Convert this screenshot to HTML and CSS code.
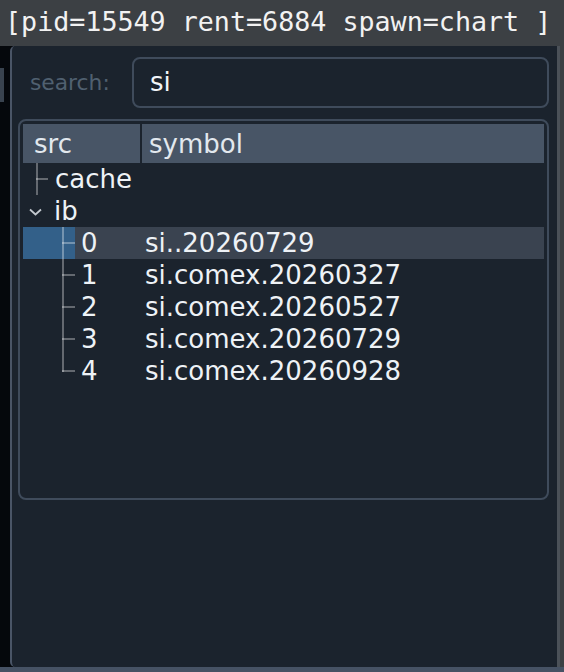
FILE: index.html
```html
<!DOCTYPE html>
<html>
<head>
<meta charset="utf-8">
<link rel="stylesheet" href="styles.css">
</head>
<body>
<div class="app">
  <div class="titlebar">[pid=15549 rent=6884 spawn=chart ]</div>
  <div class="main">
    <div class="side"><div class="side-tab"></div></div>
    <div class="panel">
      <div class="search">
        <span class="label">search:</span>
        <div class="input">si</div>
      </div>
      <div class="tree">
        <div class="thead">
          <div class="th src">src</div>
          <div class="th sym">symbol</div>
        </div>
        <div class="row">
          <div class="cell src"><span class="top-indent"></span><span class="guide"></span><span class="name top">cache</span></div>
          <div class="cell sym"></div>
        </div>
        <div class="row">
          <div class="cell src"><svg class="chev" width="13" height="8" viewBox="0 0 13 8"><path d="M1 1.5 L6.5 6.5 L12 1.5" fill="none" stroke="#c3c9cf" stroke-width="1.8"/></svg><span class="name ib">ib</span></div>
          <div class="cell sym"></div>
        </div>
        <div class="row selected">
          <div class="cell src"><span class="indent"><span class="guide"></span></span><span class="name leaf">0</span></div>
          <div class="cell sym">si..20260729</div>
        </div>
        <div class="row">
          <div class="cell src"><span class="indent"><span class="guide"></span></span><span class="name leaf">1</span></div>
          <div class="cell sym">si.comex.20260327</div>
        </div>
        <div class="row">
          <div class="cell src"><span class="indent"><span class="guide"></span></span><span class="name leaf">2</span></div>
          <div class="cell sym">si.comex.20260527</div>
        </div>
        <div class="row">
          <div class="cell src"><span class="indent"><span class="guide"></span></span><span class="name leaf">3</span></div>
          <div class="cell sym">si.comex.20260729</div>
        </div>
        <div class="row">
          <div class="cell src"><span class="indent"><span class="guide last"></span></span><span class="name leaf">4</span></div>
          <div class="cell sym">si.comex.20260928</div>
        </div>
      </div>
    </div>
    <div class="scroll"><div class="scroll-a"></div><div class="scroll-b"></div></div>
  </div>
  <div class="bottom"></div>
</div>
</body>
</html>
```

FILE: styles.css
```css
html, body {
  margin: 0;
  padding: 0;
  background: #05080c;
}
.app {
  width: 564px;
  height: 672px;
  display: flex;
  flex-direction: column;
  overflow: hidden;
}
.titlebar {
  height: 46px;
  flex: 0 0 46px;
  background: #3c4044;
  color: #f2f2f2;
  font-family: "DejaVu Sans Mono", monospace;
  font-size: 26.7px;
  line-height: 44px;
  padding-left: 5px;
  white-space: pre;
  box-sizing: border-box;
}
.main {
  flex: 1;
  display: flex;
  min-height: 0;
}
.side {
  width: 10px;
  flex: 0 0 10px;
  background: #05080c;
}
.side-tab {
  margin-top: 22px;
  width: 4px;
  height: 34px;
  background: #39434f;
}
.panel {
  flex: 1;
  background: #1b232d;
  border-left: 2px solid #4a5566;
  border-top-left-radius: 5px;
  border-bottom-left-radius: 5px;
  padding: 11px 8px 0 6px;
  font-family: "DejaVu Sans", sans-serif;
  color: #eef2f6;
  display: flex;
  flex-direction: column;
}
.search {
  display: flex;
  align-items: center;
  height: 51px;
}
.label {
  margin-left: 12px;
  width: 102px;
  font-size: 21.8px;
  color: #506070;
}
.input {
  flex: 1;
  height: 51px;
  box-sizing: border-box;
  border: 2px solid #3f4b5b;
  border-radius: 8px;
  padding-left: 16px;
  font-size: 26px;
  line-height: 46px;
  color: #f2f5f8;
}
.tree {
  margin-top: 11px;
  height: 381px;
  box-sizing: border-box;
  border: 2px solid #3f4b5b;
  border-radius: 8px;
  padding: 3px;
}
.thead {
  display: flex;
  height: 39px;
  gap: 2px;
}
.th {
  background: #485566;
  font-size: 26px;
  line-height: 40px;
  color: #e2e8ee;
}
.th.src {
  width: 117px;
  padding-left: 11px;
  box-sizing: border-box;
}
.th.sym {
  flex: 1;
  padding-left: 7px;
}
.row {
  display: flex;
  height: 32px;
  font-size: 26px;
  line-height: 33px;
}
.row.selected {
  background: #3a4350;
}
.cell.src {
  width: 119px;
  display: flex;
  align-items: stretch;
}
.cell.sym {
  flex: 1;
  padding-left: 3px;
  white-space: nowrap;
}
.top-indent {
  width: 13px;
}
.indent {
  width: 52px;
  display: flex;
  justify-content: flex-end;
}
.row.selected .indent {
  background: #336089;
}
.guide {
  position: relative;
  width: 13px;
}
.guide::before {
  content: "";
  position: absolute;
  left: 0;
  top: 0;
  bottom: 0;
  width: 2px;
  background: rgba(255, 255, 255, 0.32);
}
.guide::after {
  content: "";
  position: absolute;
  left: 0;
  top: 15px;
  width: 13px;
  height: 2px;
  background: rgba(255, 255, 255, 0.32);
}
.guide.last::before {
  bottom: 15px;
}
.top-indent + .guide {
  width: 12px;
}
.top-indent + .guide::after {
  width: 12px;
}
.name.top {
  margin-left: 7px;
}
.chev {
  margin-left: 6px;
  align-self: center;
  margin-top: 2px;
}
.name.ib {
  margin-left: 12px;
}
.name.leaf {
  margin-left: 6px;
}
.scroll {
  width: 7px;
  flex: 0 0 7px;
  display: flex;
}
.scroll-a {
  width: 3px;
  background: #4b5158;
}
.scroll-b {
  width: 4px;
  background: #3c4044;
}
.bottom {
  height: 5px;
  flex: 0 0 5px;
  background: #465264;
}
```
